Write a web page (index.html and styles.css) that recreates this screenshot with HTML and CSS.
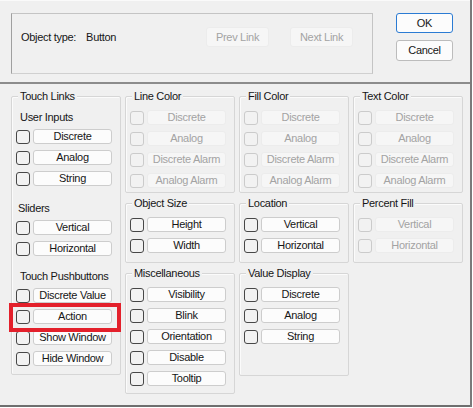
FILE: index.html
```html
<!DOCTYPE html>
<html lang="en">
<head>
  <meta charset="UTF-8" />
  <title>Animation Links</title>
  <link rel="stylesheet" href="styles.css">
</head>
<body>
  <div class="dialog">
    <div class="top">
      <div class="info">
        <span class="type-label">Object type:</span>
        <span class="type-value">Button</span>
        <div class="links">
          <button class="btn link" disabled>Prev Link</button>
          <button class="btn link" disabled>Next Link</button>
        </div>
      </div>
      <div class="actions">
        <button class="btn action ok">OK</button>
        <button class="btn action">Cancel</button>
      </div>
    </div>

    <div class="main">
      <!-- column 1 -->
      <div class="col">
        <div class="group touch-links">
          <div class="group-title">Touch Links</div>
          <div class="sublabel first">User Inputs</div>
          <div class="row"><span class="check"></span><button class="btn">Discrete</button></div>
          <div class="row"><span class="check"></span><button class="btn">Analog</button></div>
          <div class="row"><span class="check"></span><button class="btn">String</button></div>
          <div class="sublabel sliders">Sliders</div>
          <div class="row"><span class="check"></span><button class="btn">Vertical</button></div>
          <div class="row"><span class="check"></span><button class="btn">Horizontal</button></div>
          <div class="sublabel pushbuttons">Touch Pushbuttons</div>
          <div class="row"><span class="check"></span><button class="btn">Discrete Value</button></div>
          <div class="row"><span class="check"></span><button class="btn">Action</button></div>
          <div class="row"><span class="check"></span><button class="btn">Show Window</button></div>
          <div class="row"><span class="check"></span><button class="btn">Hide Window</button></div>
        </div>
      </div>

      <!-- column 2 -->
      <div class="col">
        <div class="group color off">
          <div class="group-title">Line Color</div>
          <div class="row"><span class="check"></span><button class="btn" disabled>Discrete</button></div>
          <div class="row"><span class="check"></span><button class="btn" disabled>Analog</button></div>
          <div class="row"><span class="check"></span><button class="btn" disabled>Discrete Alarm</button></div>
          <div class="row"><span class="check"></span><button class="btn" disabled>Analog Alarm</button></div>
        </div>
        <div class="group small">
          <div class="group-title">Object Size</div>
          <div class="row"><span class="check"></span><button class="btn">Height</button></div>
          <div class="row"><span class="check"></span><button class="btn">Width</button></div>
        </div>
        <div class="group misc">
          <div class="group-title">Miscellaneous</div>
          <div class="row"><span class="check"></span><button class="btn">Visibility</button></div>
          <div class="row"><span class="check"></span><button class="btn">Blink</button></div>
          <div class="row"><span class="check"></span><button class="btn">Orientation</button></div>
          <div class="row"><span class="check"></span><button class="btn">Disable</button></div>
          <div class="row"><span class="check"></span><button class="btn">Tooltip</button></div>
        </div>
      </div>

      <!-- column 3 -->
      <div class="col">
        <div class="group color off">
          <div class="group-title">Fill Color</div>
          <div class="row"><span class="check"></span><button class="btn" disabled>Discrete</button></div>
          <div class="row"><span class="check"></span><button class="btn" disabled>Analog</button></div>
          <div class="row"><span class="check"></span><button class="btn" disabled>Discrete Alarm</button></div>
          <div class="row"><span class="check"></span><button class="btn" disabled>Analog Alarm</button></div>
        </div>
        <div class="group small">
          <div class="group-title">Location</div>
          <div class="row"><span class="check"></span><button class="btn">Vertical</button></div>
          <div class="row"><span class="check"></span><button class="btn">Horizontal</button></div>
        </div>
        <div class="group value">
          <div class="group-title">Value Display</div>
          <div class="row"><span class="check"></span><button class="btn">Discrete</button></div>
          <div class="row"><span class="check"></span><button class="btn">Analog</button></div>
          <div class="row"><span class="check"></span><button class="btn">String</button></div>
        </div>
      </div>

      <!-- column 4 -->
      <div class="col">
        <div class="group color off">
          <div class="group-title">Text Color</div>
          <div class="row"><span class="check"></span><button class="btn" disabled>Discrete</button></div>
          <div class="row"><span class="check"></span><button class="btn" disabled>Analog</button></div>
          <div class="row"><span class="check"></span><button class="btn" disabled>Discrete Alarm</button></div>
          <div class="row"><span class="check"></span><button class="btn" disabled>Analog Alarm</button></div>
        </div>
        <div class="group small off">
          <div class="group-title">Percent Fill</div>
          <div class="row"><span class="check"></span><button class="btn" disabled>Vertical</button></div>
          <div class="row"><span class="check"></span><button class="btn" disabled>Horizontal</button></div>
        </div>
      </div>
    </div>
  </div>

  <!-- red annotation around the Action row -->
  <div class="highlight"></div>
</body>
</html>
```

FILE: styles.css
```css
body {
  margin: 0;
  background-color: #ffffff;
  font-family: "Liberation Sans", Arial, sans-serif;
  font-size: 11px;
  letter-spacing: -0.3px;
  color: #161616;
}

.dialog {
  width: 472px;
  box-sizing: border-box;
  background-color: #f0f0f0;
  border-right: 2px solid #7a7a7a;
}

/* Top strip */
.top {
  height: 84px;
  box-sizing: border-box;
  display: flex;
  align-items: flex-start;
  padding: 13px 0 0 11px;
  border-top: 1px solid #fafafa;
  border-bottom: 2px solid #8c8c8c;
}

.info {
  width: 362px;
  height: 61px;
  box-sizing: border-box;
  display: flex;
  align-items: center;
  padding: 0 0 14px 9px;
  border: 1px solid #c4c4c4;
  border-left-color: #a0a0a0;
  border-bottom-color: #d0d0d0;
  margin-top: -1px;
}

.type-value {
  margin-left: 10px;
}

.links {
  display: flex;
  gap: 21px;
  margin-left: auto;
  margin-right: 19px;
}

.actions {
  display: flex;
  flex-direction: column;
  gap: 7px;
  margin-left: 23px;
  margin-top: -1px;
}

/* Buttons */
.btn {
  font-family: inherit;
  font-size: 11px;
  letter-spacing: -0.3px;
  color: #161616;
  background-color: #fcfcfc;
  border: 1px solid #cdcdcd;
  border-radius: 3px;
  padding: 0;
  margin: 0;
  height: 15px;
  line-height: 13px;
  text-align: center;
  box-sizing: border-box;
}

.btn:disabled {
  color: #a3a3a3;
  background-color: #f6f6f6;
  border-color: #ececec;
}

.link {
  width: 63px;
  height: 20px;
  line-height: 18px;
}

.action {
  width: 57px;
  height: 21px;
  line-height: 19px;
  border-color: #bcbcbc;
}

.ok {
  height: 20px;
  border-color: #2b7bd3;
}

/* Lower area */
.main {
  height: 323px;
  box-sizing: border-box;
  display: flex;
  gap: 4px;
  padding: 12px 0 0 11px;
  border-bottom: 2px solid #6e6e6e;
}

.col {
  width: 110px;
  display: flex;
  flex-direction: column;
  gap: 10px;
}

.group {
  box-sizing: border-box;
  border: 1px solid #d6d6d6;
  box-shadow: inset 1px 1px 0 #fbfbfb;
  border-radius: 2px;
}

.group-title {
  width: fit-content;
  margin: -7px 0 0 6px;
  padding: 0 2px;
  height: 13px;
  line-height: 13px;
  background-color: #f0f0f0;
}

.touch-links { height: 279px; }
.color { height: 97px; }
.small { height: 60px; }
.misc { height: 121px; }
.value { height: 103px; }

.sublabel {
  line-height: 12px;
  padding-left: 8px;
}

.sublabel.first { margin-top: 8px; }
.sublabel.sliders { margin-top: 16px; padding-left: 6px; }
.sublabel.pushbuttons { margin-top: 14px; }

.row {
  display: flex;
  align-items: center;
  gap: 3px;
  height: 15px;
  margin-top: 6px;
  padding-left: 4px;
}

.group-title + .row {
  margin-top: 7px;
}

.row .btn {
  width: 79px;
}

.check {
  width: 14px;
  height: 14px;
  box-sizing: border-box;
  border: 1px solid #474747;
  border-radius: 3px;
  background-color: #f2f2f2;
}

.off .check {
  border-color: #cbcbcb;
}

/* Annotation overlay */
.highlight {
  position: absolute;
  left: 9px;
  top: 303px;
  width: 112px;
  height: 29px;
  box-sizing: border-box;
  border: 4px solid #e3202b;
}
```
